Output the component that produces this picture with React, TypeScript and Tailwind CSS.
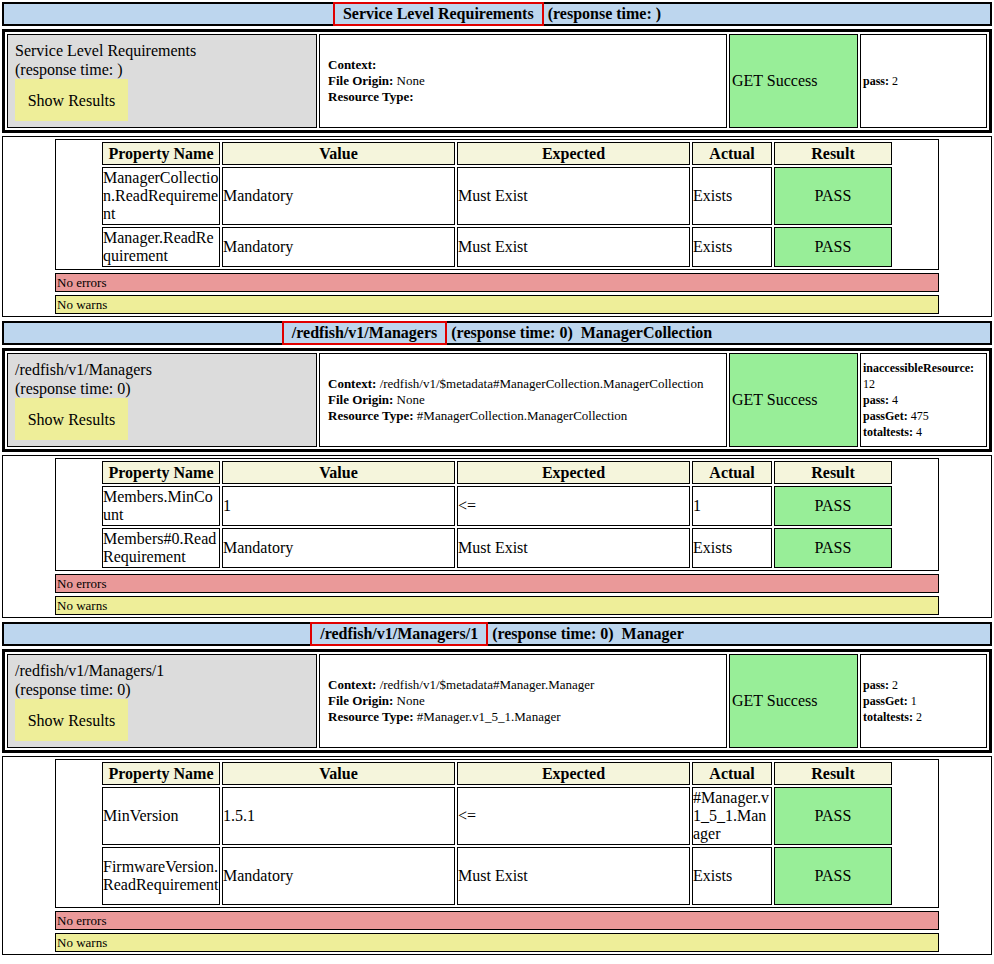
import React from "react";

type Row = { name: string; value: string; expected: string; actual: string; h: number };
type Sec = {
  title: string; rest: string; cellTitle: string; ctx: string; origin: string; rtype: string;
  stats: [string, string][]; rows: Row[];
};

const secs: Sec[] = [
  {
    title: "Service Level Requirements", rest: " (response time: )", cellTitle: "Service Level Requirements",
    ctx: "", origin: "None", rtype: "", stats: [["pass", "2"]],
    rows: [
      { name: "ManagerCollection.ReadRequirement", value: "Mandatory", expected: "Must Exist", actual: "Exists", h: 58 },
      { name: "Manager.ReadRequirement", value: "Mandatory", expected: "Must Exist", actual: "Exists", h: 40 },
    ],
  },
  {
    title: "/redfish/v1/Managers", rest: " (response time: 0)  ManagerCollection", cellTitle: "/redfish/v1/Managers",
    ctx: "/redfish/v1/$metadata#ManagerCollection.ManagerCollection", origin: "None", rtype: "#ManagerCollection.ManagerCollection",
    stats: [["inaccessibleResource", "12"], ["pass", "4"], ["passGet", "475"], ["totaltests", "4"]],
    rows: [
      { name: "Members.MinCount", value: "1", expected: "<=", actual: "1", h: 40 },
      { name: "Members#0.ReadRequirement", value: "Mandatory", expected: "Must Exist", actual: "Exists", h: 40 },
    ],
  },
  {
    title: "/redfish/v1/Managers/1", rest: " (response time: 0)  Manager", cellTitle: "/redfish/v1/Managers/1",
    ctx: "/redfish/v1/$metadata#Manager.Manager", origin: "None", rtype: "#Manager.v1_5_1.Manager",
    stats: [["pass", "2"], ["passGet", "1"], ["totaltests", "2"]],
    rows: [
      { name: "MinVersion", value: "1.5.1", expected: "<=", actual: "#Manager.v1_5_1.Manager", h: 58 },
      { name: "FirmwareVersion.ReadRequirement", value: "Mandatory", expected: "Must Exist", actual: "Exists", h: 58 },
    ],
  },
];

function Section({ s }: { s: Sec }) {
  return (
    <div className="mb-[4px]">
      <div className="mx-[2px] border-2 border-black bg-[#bdd6ee] h-[24px] flex items-center justify-center text-[16px] font-bold">
        <span className="border-2 border-[#e00000] px-[8px] leading-[20px]">{s.title}</span>
        <span className="whitespace-pre">{s.rest}</span>
      </div>
      <div className="mx-[2px] mt-[3px] border-[3px] border-black flex gap-[2px] p-[2px] h-[104px]">
        <div className="w-[310px] border border-black bg-[#dcdcdc] flex flex-col justify-center px-[7px] text-[16px] leading-[19px]">
          <div>{s.cellTitle}</div>
          <div>(response time: {s.title === "Service Level Requirements" ? "" : "0"})</div>
          <div className="mt-[0px] bg-[#eeee99] w-[113px] h-[42px] flex items-center justify-center">Show Results</div>
        </div>
        <div className="w-[408px] border border-black flex flex-col justify-center px-[8px] text-[13px] leading-[16px]">
          <div><b>Context:</b> {s.ctx}</div>
          <div><b>File Origin:</b> {s.origin}</div>
          <div><b>Resource Type:</b> {s.rtype}</div>
        </div>
        <div className="w-[129px] border border-black bg-[#98ee98] flex items-center px-[2px] text-[16px]">GET Success</div>
        <div className="flex-1 border border-black flex flex-col justify-center px-[2px] text-[12px] leading-[16px]">
          {s.stats.map(([k, v]) => (
            <div key={k}><b>{k}:</b> {v}</div>
          ))}
        </div>
      </div>
      <div className="mx-[2px] mt-[3px] border border-black pt-[2px] pb-[2px]">
        <div className="mx-[52px] border border-black flex justify-center py-[2px]">
          <table className="border-separate border-spacing-[2px] text-[16px] leading-[18px] -my-[2px]">
            <thead>
              <tr className="bg-[#f5f5dc] font-bold h-[23px]">
                <th className="w-[118px] border border-black">Property Name</th>
                <th className="w-[233px] border border-black">Value</th>
                <th className="w-[233px] border border-black">Expected</th>
                <th className="w-[80px] border border-black">Actual</th>
                <th className="w-[118px] border border-black">Result</th>
              </tr>
            </thead>
            <tbody>
              {s.rows.map((r) => (
                <tr key={r.name} style={{ height: r.h }}>
                  <td className="border border-black break-all align-middle">{r.name}</td>
                  <td className="border border-black">{r.value}</td>
                  <td className="border border-black">{r.expected}</td>
                  <td className="border border-black break-all">{r.actual}</td>
                  <td className="border border-black bg-[#98ee98] text-center">PASS</td>
                </tr>
              ))}
            </tbody>
          </table>
        </div>
        <div className="mx-[52px] mt-[3px] border border-black bg-[#ea9999] h-[19px] text-[13px] leading-[17px] px-[1px]">No errors</div>
        <div className="mx-[52px] mt-[3px] border border-black bg-[#eeee99] h-[19px] text-[13px] leading-[17px] px-[1px]">No warns</div>
      </div>
    </div>
  );
}

export default function App() {
  return (
    <div className="pt-[2px] bg-white text-black w-[994px]" style={{ fontFamily: '"Liberation Serif", serif' }}>
      {secs.map((s) => <Section key={s.title} s={s} />)}
    </div>
  );
}
